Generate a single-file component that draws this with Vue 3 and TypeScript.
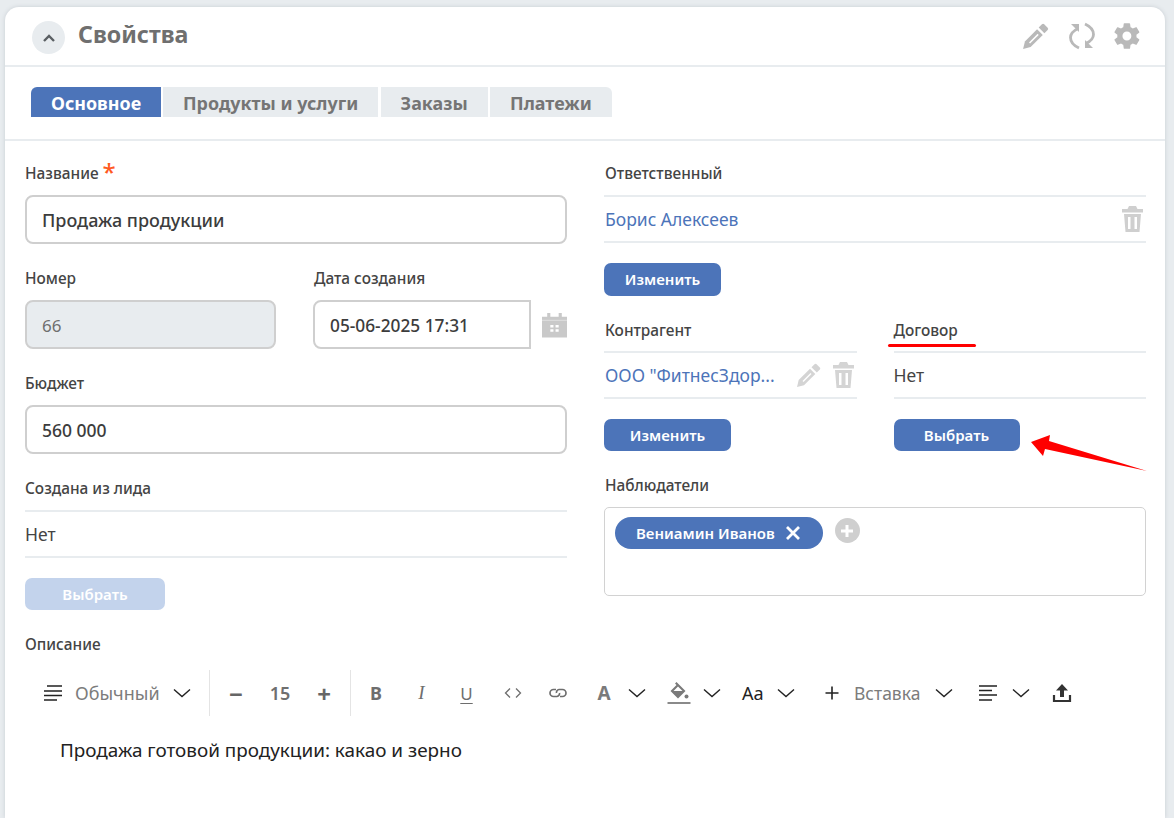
<script setup lang="ts">
const tabs = ["Основное", "Продукты и услуги", "Заказы", "Платежи"];
</script>

<template>
  <div class="card">
    <header class="head">
      <button class="collapse" aria-label="Свернуть">
        <svg width="14" height="14" viewBox="0 0 14 14"><path d="M2 10 7 5l5 5" fill="none" stroke="#5a5f63" stroke-width="2.400" /></svg>
      </button>
      <h1>Свойства</h1>
      <div class="head-icons">
        <svg width="28" height="28" viewBox="0 0 26 26" fill="#b9b9b9">
          <path d="M15.500 5.200 18.500 2.200a1.500 1.500 0 0 1 2.100 0l3.200 3.200a1.500 1.500 0 0 1 0 2.100L20.800 10.500z" />
          <path d="M14 6.700 19.300 12 8 23.300 1 25l1.700-7z" />
          <path d="M15 11.500 7 19.500" stroke="#fff" stroke-width="1.400" />
        </svg>
        <svg width="28" height="28" viewBox="0 0 28 28" fill="none" stroke="#b9b9b9" stroke-width="2.800">
          <path d="M10 6.500C5 9 2.500 12 2.500 15.500c0 4 3 8 8.500 10.500" />
          <path d="M18 21.500c5-2.500 7.500-5.500 7.500-9 0-4-3-8-8.500-10.500" />
          <path d="M3 2h8v8z" fill="#b9b9b9" stroke="none" />
          <path d="M25 26h-8v-8z" fill="#b9b9b9" stroke="none" />
        </svg>
        <svg width="28" height="28" viewBox="1 1 22 22" fill="#b9b9b9"><path d="M19.400 13c.04-.33.06-.66.06-1s-.02-.67-.06-1l2.100-1.640a.5.5 0 0 0 .12-.64l-2-3.460a.5.5 0 0 0-.61-.22l-2.490 1a7.300 7.300 0 0 0-1.730-1l-.38-2.650A.49.49 0 0 0 13.920 2h-4a.49.49 0 0 0-.49.42l-.38 2.650a7.700 7.700 0 0 0-1.730 1l-2.490-1a.5.5 0 0 0-.61.22l-2 3.460a.49.49 0 0 0 .12.64L4.440 11a7.900 7.900 0 0 0 0 2l-2.100 1.640a.5.5 0 0 0-.12.64l2 3.460c.12.22.39.3.61.22l2.490-1c.52.4 1.080.73 1.730 1l.38 2.650c.03.24.24.42.49.42h4c.25 0 .46-.18.49-.42l.38-2.650a7.700 7.700 0 0 0 1.730-1l2.490 1c.22.08.49 0 .61-.22l2-3.460a.5.5 0 0 0-.12-.64zM11.920 15.500a3.500 3.500 0 1 1 0-7 3.500 3.500 0 0 1 0 7z" /></svg>
      </div>
    </header>

    <nav class="tabs">
      <span v-for="(t, i) in tabs" :key="t" class="tab" :class="{ active: i === 0 }">{{ t }}</span>
    </nav>

    <div class="form">
      <div class="col">
        <div class="field">
          <label>Название <span class="req">*</span></label>
          <div class="input title">Продажа продукции</div>
        </div>
        <div class="pair">
          <div class="field num">
            <label>Номер</label>
            <div class="input disabled">66</div>
          </div>
          <div class="field date">
            <label>Дата создания</label>
            <div class="date-row">
              <div class="input square">05-06-2025 17:31</div>
              <svg width="26" height="26" viewBox="1 1 24 24" fill="#c9c9c9">
                <path d="M1 5h5V1.500h3V5h8V1.500h3V5h5v20H1z" />
                <path d="M1 8.500h24" stroke="#fff" stroke-width="0.800" opacity="0.500" />
                <path d="M9 13h3v2.500H9zM14 13h3v2.500h-3zM9 17h3v2.500H9zM14 17h3v2.500h-3z" fill="#fff" />
              </svg>
            </div>
          </div>
        </div>
        <div class="field budget">
          <label>Бюджет</label>
          <div class="input sum">560 000</div>
        </div>
        <div class="field lead">
          <label>Создана из лида</label>
          <div class="value">Нет</div>
          <button class="btn faded">Выбрать</button>
        </div>
      </div>

      <div class="col right">
        <div class="field">
          <label>Ответственный</label>
          <div class="value">
            <a>Борис Алексеев</a>
            <svg class="push" width="21" height="26" viewBox="0 0 21 26" fill="#cfcfcf">
              <path d="M7 0h7l1.500 3H21v3.500H0V3h5.500z" />
              <path fill-rule="evenodd" d="M2 8h17l-1.500 18h-14zM6 11v12h2.500V11zm6.500 0v12H15V11z" />
            </svg>
          </div>
          <button class="btn owner">Изменить</button>
        </div>
        <div class="pair split">
          <div class="field half">
            <label>Контрагент</label>
            <div class="value">
              <a>ООО "ФитнесЗдор...</a>
              <span class="row-icons">
                <svg width="26" height="26" viewBox="0 0 26 26" fill="#d4d4d4">
                  <path d="M15.500 5.200 18.500 2.200a1.500 1.500 0 0 1 2.100 0l3.200 3.200a1.500 1.500 0 0 1 0 2.100L20.800 10.500z" />
                  <path d="M14 6.700 19.300 12 8 23.300 1 25l1.700-7z" />
                  <path d="M15 11.500 7 19.500" stroke="#fff" stroke-width="1.400" />
                </svg>
                <svg width="21" height="26" viewBox="0 0 21 26" fill="#d4d4d4">
                  <path d="M7 0h7l1.500 3H21v3.500H0V3h5.500z" />
                  <path fill-rule="evenodd" d="M2 8h17l-1.500 18h-14zM6 11v12h2.500V11zm6.500 0v12H15V11z" />
                </svg>
              </span>
            </div>
            <button class="btn change">Изменить</button>
          </div>
          <div class="field half contract">
            <label>Договор</label>
            <div class="value">Нет</div>
            <button class="btn choose">Выбрать</button>
          </div>
        </div>
        <div class="field watchers">
          <label>Наблюдатели</label>
          <div class="watch-box">
            <span class="chip">Вениамин Иванов
              <svg width="16" height="16" viewBox="0 0 16 16"><path d="M2 2l12 12M14 2 2 14" stroke="#fff" stroke-width="2.800" /></svg>
            </span>
            <span class="add">
              <svg width="14" height="14" viewBox="0 0 14 14"><path d="M7 1v12M1 7h12" stroke="#fff" stroke-width="3" /></svg>
            </span>
          </div>
        </div>
      </div>
    </div>

    <div class="descr">
      <label>Описание</label>
      <div class="toolbar">
        <span class="grp first">
          <svg width="20" height="16" viewBox="0 0 20 16"><path d="M4 1h15M1 6h18M1 10.500h18M1 15h13" stroke="#222" stroke-width="1.600" /></svg>
          <span class="muted style-name">Обычный</span>
          <svg class="chev" width="18" height="10" viewBox="0 0 18 10"><path d="M1 1.500 9 8.500l8-7" /></svg>
        </span>
        <span class="grp size">
          <b class="pm">−</b><b class="size-num">15</b><b class="pm">+</b>
        </span>
        <span class="fmt">
          <b class="f-b">B</b>
          <i class="f-i">I</i>
          <span class="f-u">U</span>
          <svg class="code" width="20" height="12" viewBox="0 0 20 12" fill="none" stroke="#6e6e6e" stroke-width="1.300"><path d="M7 1.500 2.500 6 7 10.500M13 1.500 17.500 6 13 10.500" /></svg>
          <svg class="link" width="20" height="12" viewBox="0 0 20 12" fill="none" stroke="#6e6e6e" stroke-width="1.700"><path d="M8 2.500H5.500a3.500 3.500 0 0 0 0 7H9a3 3 0 0 0 2.500-3.500M12 9.500h2.500a3.500 3.500 0 0 0 0-7H11A3 3 0 0 0 8.500 6" /></svg>
        </span>
        <b class="f-a">A</b>
        <svg class="chev" width="18" height="10" viewBox="0 0 18 10"><path d="M1 1.500 9 8.500l8-7" /></svg>
        <svg class="fill" width="24" height="24" viewBox="0 0 24 24">
          <path d="M9.500 1 8 2.500l1.500 1.500L3.500 10l7.500 7.500 7.500-7.500zM6.500 10l4.500-4.500L15.500 10z" fill="#7a7a7a" fill-rule="evenodd" />
          <circle cx="19.500" cy="15.500" r="2" fill="#7a7a7a" />
          <path d="M0.500 22h23" stroke="#8a8a8a" stroke-width="2" />
        </svg>
        <svg class="chev" width="18" height="10" viewBox="0 0 18 10"><path d="M1 1.500 9 8.500l8-7" /></svg>
        <span class="aa">Aa</span>
        <svg class="chev" width="18" height="10" viewBox="0 0 18 10"><path d="M1 1.500 9 8.500l8-7" /></svg>
        <svg class="plus" width="14" height="14" viewBox="0 0 14 14"><path d="M7 0.500v13M0.500 7h13" stroke="#222" stroke-width="1.600" /></svg>
        <span class="muted ins">Вставка</span>
        <svg class="chev" width="18" height="10" viewBox="0 0 18 10"><path d="M1 1.500 9 8.500l8-7" /></svg>
        <svg class="align" width="20" height="16" viewBox="0 0 20 16"><path d="M1 1h18M1 5.500h13M1 10h18M1 15h13" stroke="#222" stroke-width="1.600" /></svg>
        <svg class="chev" width="18" height="10" viewBox="0 0 18 10"><path d="M1 1.500 9 8.500l8-7" /></svg>
        <svg class="upload" width="20" height="20" viewBox="0 0 20 20"><path d="M10 1l6 6.500h-4V14H8V7.500H4z" fill="#333" /><path d="M2 12v6h16v-6" fill="none" stroke="#333" stroke-width="2.200" /></svg>
      </div>
      <p class="text">Продажа готовой продукции: какао и зерно</p>
    </div>

    <div class="underline"></div>
    <svg class="arrow" width="116" height="42" viewBox="0 0 116 42"><path d="M0 12 19 5l-1 6 98 30-102-22-2 7z" fill="#f00" /></svg>
  </div>
</template>

<style scoped>
.card {
  position: relative;
  margin: 7px 9px 0 5px;
  height: 811px;
  box-sizing: border-box;
  background: #fff;
  border-radius: 14px 14px 0 0;
  box-shadow: 0 0 4px #c8ced3;
  font-family: "Noto Sans", sans-serif;
  color: #333;
  overflow: hidden;
}
.head {
  display: flex;
  align-items: center;
  height: 58px;
  padding: 0 24px 0 27px;
  border-bottom: 2px solid #e8ecef;
  box-sizing: content-box;
}
.collapse {
  width: 33px;
  height: 33px;
  border: 0;
  border-radius: 50%;
  background: #e8ecef;
  padding: 0;
  display: flex;
  align-items: center;
  justify-content: center;
  margin-top: 3px;
}
h1 {
  margin: 0 0 5px 13px;
  font-size: 23.200px;
  font-weight: 700;
  color: #6f6f6f;
  line-height: 30px;
}
.head-icons {
  margin-left: auto;
  display: flex;
  gap: 17.500px;
}
.tabs {
  display: flex;
  gap: 2.400px;
  padding: 20px 0 22px 26px;
  border-bottom: 2px solid #e8ecef;
}
.tab {
  height: 30px;
  padding: 0 20px;
  line-height: 32px;
  font-size: 17.900px;
  font-weight: 700;
  background: #e8ecef;
  color: #757575;
}
.tab:first-child { border-radius: 6px 0 0 0; padding: 0 19.500px 0 20px; }
.tab:last-child { border-radius: 0 6px 0 0; }
.tab.active { background: #4c74b9; color: #fff; }
.form {
  display: flex;
  gap: 37px;
  padding: 0 19px 0 20px;
}
.col { width: 542px; }
.field { display: flex; flex-direction: column; align-items: flex-start; }
label {
  display: block;
  font-size: 15.400px;
  font-weight: 500;
  line-height: 20px;
  color: #444;
  margin-top: 23px;
  margin-bottom: 11px;
}
.right label, .date label { margin-left: 1px; }
.right .contract label { margin-left: 0; }
.req { color: #ff5a1f; font-size: 24px; line-height: 10px; position: relative; top: 2px; }
.input {
  box-sizing: border-box;
  width: 100%;
  height: 49px;
  border: 2px solid #cfcfcf;
  border-radius: 8px;
  padding: 0 15px;
  line-height: 47px;
  font-size: 17.300px;
  font-weight: 500;
  color: #3c3c3c;
}
.input.title { font-size: 18px; }
.input.sum { font-size: 17.500px; }
.input.disabled { background: #e8ecef; color: #6f6f6f; font-weight: 400; font-size: 17px; }
.input.square { border-radius: 8px 0 0 8px; width: 218px; flex: none; padding-right: 0; }
.pair { display: flex; gap: 37px; }
.pair .field { margin-top: 2px; }
.num { width: 252px; }
.date { width: 254px; }
.date-row { display: flex; align-items: center; gap: 11px; width: 100%; }
.budget { margin-top: 2px; }
.value {
  box-sizing: border-box;
  width: 100%;
  height: 48px;
  display: flex;
  align-items: center;
  border-top: 2px solid #e8ecef;
  border-bottom: 2px solid #e8ecef;
  font-size: 17.500px;
  color: #444;
}
.value a { color: #4c74b9; margin-left: 1px; }
.push { margin-left: auto; margin-right: 3px; }
.row-icons { margin-left: auto; display: flex; align-items: center; gap: 11px; margin-right: 3px; }
.btn {
  height: 32px;
  margin-top: 20px;
  border: 0;
  border-radius: 7px;
  background: #4c74b9;
  color: #fff;
  font: 600 15px "Noto Sans", sans-serif;
  padding: 0;
}
.faded { background: #c3d3ec; width: 140px; }
.owner { width: 117px; height: 33px; padding-bottom: 2px; }
.change { width: 127px; }
.choose { width: 126px; }
.lead { margin-top: 2px; }
.split { gap: 37px; }
.half { width: 252.500px; }
.split .field { margin-top: 2px; }
.split label { margin-top: 23px; margin-bottom: 10px; }
.watchers label { margin-top: 25px; margin-bottom: 11px; }
.watch-box {
  box-sizing: border-box;
  width: 100%;
  height: 89px;
  border: 1px solid #d2d2d2;
  border-radius: 5px;
  padding: 9px 10px;
  display: flex;
  align-items: flex-start;
  gap: 12px;
}
.chip {
  height: 32px;
  border-radius: 16px;
  background: #4c74b9;
  color: #fff;
  padding: 0 22px 0 21px;
  font-size: 15px;
  font-weight: 600;
  display: flex;
  align-items: center;
  gap: 10px;
}
.add {
  width: 25px;
  height: 25px;
  border-radius: 50%;
  background: #cfcfcf;
  display: flex;
  align-items: center;
  justify-content: center;
  margin-top: 1px;
}
.descr { padding: 0 20px; }
.descr label { margin: 25px 0 0; }
.toolbar {
  display: flex;
  align-items: center;
  height: 46px;
  margin-top: 15px;
}
.grp { display: flex; align-items: center; height: 46px; }
.first { padding: 0 18px; border-right: 1px solid #e4e4e4; }
.muted { color: #7c7c7c; font-size: 18px; white-space: nowrap; }
.style-name { margin: 0 14px 0 12px; width: 84px; }
.chev { fill: none; stroke: #222; stroke-width: 1.400; flex: none; }
.size { padding: 0 19px; border-right: 1px solid #e4e4e4; }
.pm { font-size: 24px; color: #666; width: 14px; text-align: center; }
.size-num { font-size: 18px; font-weight: 600; color: #6f6f6f; width: 74px; text-align: center; }
.fmt { display: flex; align-items: center; color: #6e6e6e; padding-left: 19px; }
.f-b { font-size: 18px; width: 14px; text-align: center; margin-left: -1px; margin-right: 1px; }
.f-i { font: italic 19px "Liberation Serif", serif; width: 14px; text-align: center; margin-left: 30.500px; }
.f-u { font-size: 17px; width: 14px; text-align: center; margin-left: 31px; text-decoration: underline; text-underline-offset: 3px; }
.code { margin-left: 29.500px; }
.link { margin-left: 25px; }
.f-a { margin-left: 29px; margin-right: 17px; font-size: 19px; width: 14px; text-align: center; color: #7a7a7a; }
.fill { margin: 0 12px 0 21px; flex: none; }
.aa { font-size: 18px; color: #222; width: 23px; margin: 0 12px 0 21px; }
.plus { margin-left: 30px; }
.ins { margin: 0 15px; width: 66px; font-size: 17.500px; }
.align { margin: 0 14px 0 25px; }
.upload { margin-left: 22px; }
.text { margin: 21px 0 0 35px; font-size: 18.900px; line-height: 26px; color: #222; }
.underline {
  position: absolute;
  left: 883px;
  top: 337px;
  width: 88px;
  height: 3px;
  border-radius: 2px;
  background: #f00;
}
.arrow { position: absolute; left: 1026px; top: 423px; }
</style>

<style>
html, body { background: #e8ecef; overflow: hidden; }
</style>
